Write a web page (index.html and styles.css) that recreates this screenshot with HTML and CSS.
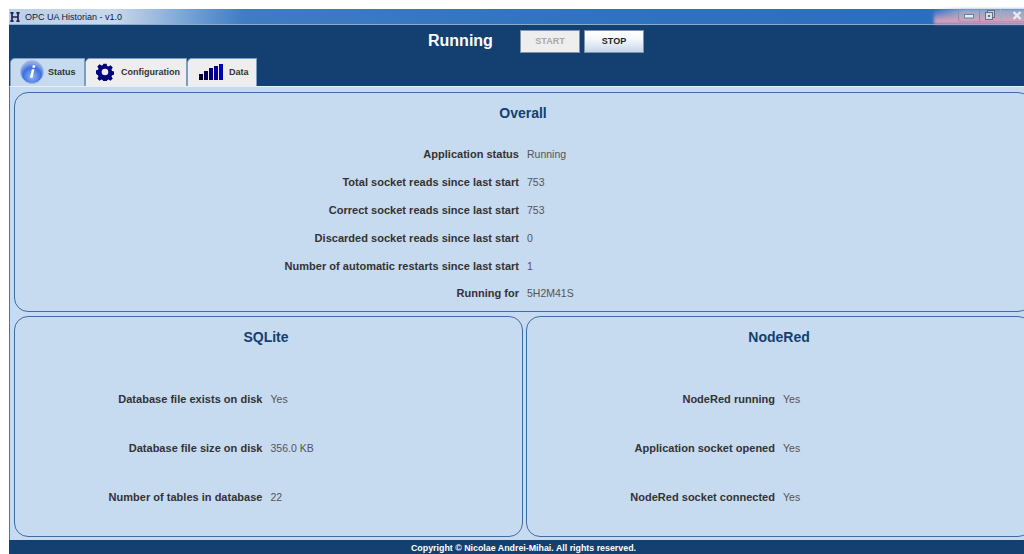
FILE: index.html
```html
<!DOCTYPE html>
<html lang="en">
<head>
<meta charset="utf-8">
<title>OPC UA Historian - v1.0</title>
<link rel="stylesheet" href="styles.css">
</head>
<body>
<div class="window">
  <header class="titlebar">
    <svg class="app-icon" width="12" height="10" viewBox="0 0 12 10"><path d="M2 0.5V9.5M0.4 0.8H3.6M0.4 9.2H3.6M8 0.5V9.5M6.4 0.8H9.6M6.4 9.2H9.6M2 5H8" fill="none" stroke="#1c2450" stroke-width="1.7"/></svg>
    <span class="title-text">OPC UA Historian - v1.0</span>
    <div class="title-glow"></div>
    <div class="caption-buttons">
      <span class="caption caption-min"><svg width="10" height="5" viewBox="0 0 10 5"><rect x="0.5" y="0.5" width="9" height="3.5" fill="#e8ecf2" stroke="#6f7f95"/></svg></span>
      <span class="caption"><svg width="10" height="10" viewBox="0 0 10 10"><rect x="2.5" y="0.5" width="7" height="7" fill="#c4ccd8" stroke="#5f6f85"/><rect x="0.5" y="2.5" width="7" height="7" fill="#d8dee6" stroke="#5f6f85"/><rect x="3" y="5" width="2" height="2" fill="#5f6f85"/></svg></span>
      <span class="caption caption-close"><svg width="10" height="9" viewBox="0 0 10 9"><path d="M1.5 1L8.5 8M8.5 1L1.5 8" stroke="#e8ecf2" stroke-width="2.4"/></svg></span>
    </div>
  </header>

  <section class="toolbar">
    <div class="run-row">
      <span class="run-state">Running</span>
      <button class="btn btn-off" type="button">START</button>
      <button class="btn btn-on" type="button">STOP</button>
    </div>
    <nav class="tabs">
      <div class="tab tab-active">
        <svg width="24" height="24" viewBox="1 1 24 24">
          <defs>
            <radialGradient id="orb" cx="50%" cy="70%" r="60%">
              <stop offset="0" stop-color="#8fb6f4"/>
              <stop offset="0.65" stop-color="#3f6fe0"/>
              <stop offset="1" stop-color="#8fa9e6"/>
            </radialGradient>
          </defs>
          <circle cx="13" cy="13" r="11.5" fill="url(#orb)" stroke="#a9bfe8"/>
          <path d="M13.8 6.2h2.6l-.5 2.5h-2.6zM12.9 10.2h2.5l-1.9 8.6h-2.6z" fill="#fff"/>
        </svg>
        <span>Status</span>
      </div>
      <div class="tab">
        <svg width="18" height="18" viewBox="0 0 20 20">
          <path fill="#000080" fill-rule="evenodd" d="M8.2 0.8h3.6l.5 2.5 1.6.7 2.2-1.4 2.5 2.5-1.4 2.2.7 1.6 2.5.5v3.6l-2.5.5-.7 1.6 1.4 2.2-2.5 2.5-2.2-1.4-1.6.7-.5 2.5H8.2l-.5-2.5-1.6-.7-2.2 1.4-2.5-2.5 1.4-2.2-.7-1.6L-.4 11.8V8.2l2.5-.5.7-1.6-1.4-2.2 2.5-2.5 2.2 1.4 1.6-.7zM10 6.3a3.7 3.7 0 1 0 0 7.4 3.7 3.7 0 0 0 0-7.4z"/>
        </svg>
        <span>Configuration</span>
      </div>
      <div class="tab">
        <svg class="bars" width="24" height="16" viewBox="0 0 24 16">
          <rect x="0" y="10" width="4" height="6" fill="#000030"/>
          <rect x="5" y="7" width="4" height="9" fill="#000050"/>
          <rect x="10" y="4" width="4" height="12" fill="#000078"/>
          <rect x="15" y="2" width="4" height="14" fill="#000098"/>
          <rect x="20" y="0" width="4" height="16" fill="#0000b8"/>
        </svg>
        <span>Data</span>
      </div>
    </nav>
  </section>

  <main class="content">
    <section class="panel panel-overall">
      <h2 class="panel-title">Overall</h2>
      <dl class="rows rows-overall">
        <dt>Application status</dt><dd>Running</dd>
        <dt>Total socket reads since last start</dt><dd>753</dd>
        <dt>Correct socket reads since last start</dt><dd>753</dd>
        <dt>Discarded socket reads since last start</dt><dd>0</dd>
        <dt>Number of automatic restarts since last start</dt><dd>1</dd>
        <dt>Running for</dt><dd>5H2M41S</dd>
      </dl>
    </section>
    <div class="panel-pair">
      <section class="panel panel-sqlite">
        <h2 class="panel-title">SQLite</h2>
        <dl class="rows rows-lower">
          <dt>Database file exists on disk</dt><dd>Yes</dd>
          <dt>Database file size on disk</dt><dd>356.0 KB</dd>
          <dt>Number of tables in database</dt><dd>22</dd>
        </dl>
      </section>
      <section class="panel panel-nodered">
        <h2 class="panel-title">NodeRed</h2>
        <dl class="rows rows-lower">
          <dt>NodeRed running</dt><dd>Yes</dd>
          <dt>Application socket opened</dt><dd>Yes</dd>
          <dt>NodeRed socket connected</dt><dd>Yes</dd>
        </dl>
      </section>
    </div>
  </main>

  <footer class="footer">Copyright © Nicolae Andrei-Mihai. All rights reserved.</footer>
</div>
</body>
</html>
```

FILE: styles.css
```css
* { box-sizing: border-box; }

html, body {
  margin: 0;
  height: 554px;
  overflow: hidden;
  background: #fff;
}

body {
  padding: 9px 0 0 9px;
  font-family: "Liberation Sans", Arial, sans-serif;
}

.window {
  width: 1023px;
  height: 545px;
  display: flex;
  flex-direction: column;
}

/* Title bar */
.titlebar {
  position: relative;
  flex: 0 0 16px;
  display: flex;
  align-items: center;
  gap: 3px;
  padding: 1px 0 0 1px;
  background: linear-gradient(90deg, #bccfe6 0, #c8d8ec 105px, #a4bfe0 140px, #6a9ad2 190px, #3f7cc4 235px, #2f72bf 600px, #2a6fbe 920px, #4d86c4 1023px);
  border-bottom: 1px solid #8ba9cc;
}

.title-text {
  font-size: 9px;
  color: #10203a;
}

.title-glow {
  position: absolute;
  top: 0;
  bottom: 0;
  left: 925px;
  right: 0;
  background:
    linear-gradient(180deg, rgba(225,160,190,0) 10%, #d9a0bc 80%),
    linear-gradient(90deg, rgba(140,165,200,0), #8fa8c8 30%);
  filter: blur(1.5px);
  overflow: hidden;
}

.caption-buttons {
  position: absolute;
  top: 0;
  left: 949px;
  display: flex;
  height: 13px;
}

.caption {
  width: 21px;
  height: 13px;
  display: flex;
  align-items: center;
  justify-content: center;
  border-left: 1px solid #7f93ad;
  border-bottom: 1px solid rgba(127,147,173,0.5);
}

.caption-min {
  align-items: flex-end;
  padding-bottom: 2px;
  border-radius: 0 0 0 3px;
}

.caption-close {
  width: 32px;
  border-left-color: #9fadc0;
}

/* Run state and tabs */
.toolbar {
  flex: 0 0 60px;
  display: flex;
  flex-direction: column;
  background: #134070;
}

.run-row {
  flex: 0 0 33px;
  display: flex;
  align-items: center;
  padding: 0 0 1px 419px;
}

.run-state {
  width: 92px;
  font-size: 16px;
  font-weight: bold;
  color: #fff;
}

.btn {
  width: 60px;
  height: 23px;
  margin-right: 4px;
  padding: 0;
  border: 1px solid #7f93ad;
  font: bold 9px "Liberation Sans", Arial, sans-serif;
}

.btn-off {
  background: #eeeeee;
  color: #a8a8a8;
}

.btn-on {
  background: linear-gradient(180deg, #fff 0, #f4f7fb 40%, #c6d6ea 100%);
  color: #222;
}

.tabs {
  flex: 1;
  display: flex;
  align-items: flex-end;
  padding-left: 1px;
}

.tab {
  height: 28px;
  display: flex;
  align-items: center;
  gap: 7px;
  padding: 0 0 2px 10px;
  background: #eeeeee;
  border: 1px solid #7f9dc0;
  border-bottom: 0;
  border-radius: 5px 0 0 0;
  font-size: 9px;
  font-weight: bold;
  color: #333;
}

.tab:nth-child(2) { width: 102px; }
.tab:nth-child(3) { width: 70px; padding-left: 11px; gap: 6px; }

.tab-active {
  width: 75px;
  padding: 0 0 2px 9px;
  background: #c6daf0;
  gap: 4px;
}

/* Panels */
.content {
  flex: 1;
  display: flex;
  flex-direction: column;
  gap: 4px;
  padding: 5px 0 3px 4px;
  background: #c6daf0;
  border-top: 1px solid #e6eef8;
  border-left: 1px solid #4a74a8;
  min-height: 0;
}

.panel {
  border: 1px solid #3f6ca3;
  border-radius: 14px;
  min-width: 0;
}

.panel-overall {
  height: 220px;
}

.panel-pair {
  flex: 1;
  display: flex;
  gap: 3px;
  min-height: 0;
}

.panel-sqlite { flex: 0 0 509px; }
.panel-nodered { flex: 1; }

.panel-title {
  margin: 0;
  padding-top: 12px;
  font-size: 14px;
  font-weight: bold;
  text-align: center;
  color: #134070;
}

.panel-sqlite .panel-title { padding-right: 5px; }

.rows {
  margin: 0;
  display: grid;
  grid-template-columns: 1fr 1fr;
  column-gap: 8px;
  font-size: 11px;
  line-height: 13px;
}

.rows dt {
  text-align: right;
  font-weight: bold;
  letter-spacing: 0.02px;
  color: #333;
}

.rows dd {
  margin: 0;
  font-size: 10.5px;
  color: #555;
}

.rows-overall {
  margin-top: 27px;
  row-gap: 14.9px;
}

.rows-lower {
  margin-top: 48px;
  row-gap: 36px;
}

.panel-sqlite .rows-lower { padding-right: 4px; }

/* Footer */
.footer {
  flex: 0 0 14px;
  display: flex;
  align-items: center;
  justify-content: center;
  padding: 2px 0 0 6px;
  background: #134070;
  color: #fff;
  font-size: 8.85px;
  font-weight: bold;
}
```
